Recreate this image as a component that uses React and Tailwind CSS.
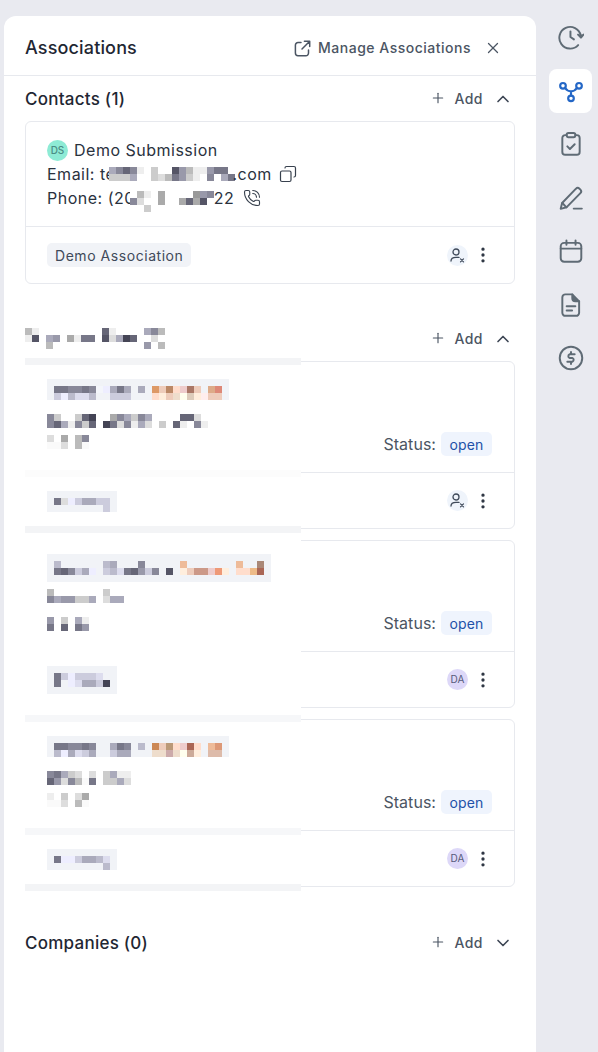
import React from "react";
import { X, Plus, ChevronUp, ChevronDown, EllipsisVertical, Copy, PhoneCall } from "lucide-react";

function Mosaic({ rows, className = "" }) {
  const parsed = rows.map((r) => r.trim().split(/\s+/));
  const cols = Math.max(...parsed.map((r) => r.length));
  return (
    <svg width={cols * 7} height={parsed.length * 7} className={`block shrink-0 ${className}`} shapeRendering="crispEdges">
      {parsed.map((r, y) =>
        r.map((c, x) => (c === "." ? null : <rect key={`${x}-${y}`} x={x * 7} y={y * 7} width="7" height="7" fill={`#${c}`} />))
      )}
    </svg>
  );
}

const Stripe = ({ className }) => <div className={`-ml-[22px] h-[7px] w-[276px] shrink-0 ${className}`} />;

const Tag = ({ rows, className }) => (
  <div className={`w-fit bg-[#f1f3f7] pl-[7px] pr-[7px] pt-[7px] ${className}`}>
    <Mosaic rows={rows} />
  </div>
);

const stroke = { fill: "none", stroke: "currentColor", strokeWidth: 1.8, strokeLinecap: "round", strokeLinejoin: "round" };

const Rail = {
  History: () => (
    <svg width="26" height="26" viewBox="0 0 24 24" {...stroke}>
      <path d="M21 10.5A10 10 0 1 0 18.6 19.5" />
      <path d="M18.5 9.8 21.2 12.6 23.6 9.8" fill="currentColor" />
      <path d="M11.5 6.8v5.2l3.2 2.2" />
    </svg>
  ),
  Share: () => (
    <svg width="26" height="26" viewBox="0 0 24 24" fill="none" stroke="#2467c6" strokeWidth="2" strokeLinecap="round">
      <circle cx="4.6" cy="7.2" r="2.6" />
      <circle cx="19.4" cy="7.2" r="2.6" />
      <circle cx="12" cy="18.8" r="2.6" />
      <path d="M6.6 9.2C8 11.4 9.8 12.2 12 12.2s4-.8 5.4-3M12 12.2v4" />
    </svg>
  ),
  Clipboard: () => (
    <svg width="26" height="26" viewBox="0 0 24 24" {...stroke}>
      <path d="M8 3.8H6.6A2.6 2.6 0 0 0 4 6.4v13A2.6 2.6 0 0 0 6.6 22h10.8a2.6 2.6 0 0 0 2.6-2.6v-13a2.6 2.6 0 0 0-2.6-2.6H16" />
      <rect x="8" y="1.8" width="8" height="4" rx="1.6" />
      <path d="M8.6 14.2l2.4 2.4 4.4-4.4" />
    </svg>
  ),
  Pen: () => (
    <svg width="26" height="26" viewBox="0 0 24 24" {...stroke}>
      <path d="M2.5 22l1.3-5.4L16.6 3.4a2.3 2.3 0 0 1 3.2 0l.9.9a2.3 2.3 0 0 1 0 3.2L7.8 20.6z" />
      <path d="M4 16.6l3.8 4" />
      <path d="M14.5 21.8h7.5" />
    </svg>
  ),
  Calendar: () => (
    <svg width="26" height="26" viewBox="0 0 24 24" {...stroke}>
      <rect x="2.5" y="4.5" width="19" height="17.5" rx="3.2" />
      <path d="M2.5 9.8h19M7.8 2.2v4M16.2 2.2v4" />
    </svg>
  ),
  File: () => (
    <svg width="26" height="26" viewBox="0 0 24 24" {...stroke}>
      <path d="M6.8 2.2h6.4l6.3 6.4v10.6a2.8 2.8 0 0 1-2.8 2.8H6.8A2.8 2.8 0 0 1 4 19.2V5a2.8 2.8 0 0 1 2.8-2.8z" />
      <path d="M13.2 2.2v3.6a2.8 2.8 0 0 0 2.8 2.8h3.5" fill="currentColor" />
      <path d="M8 13.2h8M8 17h5" />
    </svg>
  ),
  Dollar: () => (
    <svg width="26" height="26" viewBox="0 0 24 24" {...stroke}>
      <circle cx="12" cy="12" r="10.4" />
      <path d="M15.4 8.6H10.6a1.9 1.9 0 0 0 0 3.4h2.8a1.9 1.9 0 0 1 0 3.4H8.6M12 6.4v2.2M12 15.4v2.2" />
    </svg>
  ),
};

const ManageIcon = () => (
  <svg width="17" height="17" viewBox="0 0 17 17" fill="none" stroke="currentColor" strokeWidth="1.5" strokeLinecap="round" strokeLinejoin="round">
    <path d="M7 2.6H4A2.6 2.6 0 0 0 1.4 5.2v7.9A2.6 2.6 0 0 0 4 15.7h7.9a2.6 2.6 0 0 0 2.6-2.6V10" />
    <path d="M10.4 1.3h5.3v5.3M15.7 1.3 8 9" />
  </svg>
);

const UserXBadge = () => (
  <div className="flex h-[21px] w-[21px] items-center justify-center rounded-full bg-[#eff4fb] text-[#3f4a5a]">
    <svg width="17" height="17" viewBox="0 0 17 17" fill="none" stroke="currentColor" strokeWidth="1.3" strokeLinecap="round">
      <circle cx="7" cy="5" r="3" />
      <path d="M2 14c0-2.4 2-3.6 5-3.6h3" />
      <path d="M11.5 11.8l3 3M14.5 11.8l-3 3" strokeWidth="1.2" />
    </svg>
  </div>
);

const DaBadge = () => (
  <div className="flex h-[21px] w-[21px] items-center justify-center rounded-full bg-[#ddd8f8] text-[10px] text-[#565a78]">DA</div>
);

function SectionHeader({ children, open = true }) {
  return (
    <div className="flex h-[45px] items-center justify-between pr-[2px]">
      {children}
      <div className="flex items-center text-[#4b5563]">
        <Plus size={16} strokeWidth={1.7} className="-mt-[2px]" />
        <span className="ml-[8px] text-[14px] font-medium leading-none tracking-[0.5px]">Add</span>
        {open ? (
          <ChevronUp size={20} strokeWidth={2} className="ml-[10px] text-[#3d4654]" />
        ) : (
          <ChevronDown size={20} strokeWidth={2} className="ml-[10px] text-[#3d4654]" />
        )}
      </div>
    </div>
  );
}

function DealCard({ badge, className = "" }) {
  return (
    <div className={`h-[168px] rounded-md border border-[#e7e9ee] ${className}`}>
      <div className="flex h-[111px] items-end justify-end border-b border-[#e7e9ee] pb-[16px] pr-[22px]">
        <span className="text-[16px] leading-[24px] tracking-[0.03px] text-[#4b5563]">Status:</span>
        <span className="ml-[5px] flex h-[24px] w-[51px] items-center justify-center rounded-[5px] bg-[#eff4fd] text-[14px] tracking-[0.2px] text-[#2251a8]">open</span>
      </div>
      <div className="flex h-[55px] items-center justify-end gap-[5px] pr-[21px]">
        {badge}
        <EllipsisVertical size={20} strokeWidth={2} className="text-[#2f3744]" />
      </div>
    </div>
  );
}

export default function App() {
  return (
    <div className="flex h-[1052px] w-[598px] overflow-hidden bg-[#e9eaf0] pl-[4px] pt-[16px] [font-family:Inter,sans-serif] text-[#1f2733]">
      <div className="h-[1036px] w-[532px] shrink-0 rounded-t-[12px] bg-white">
        <div className="flex h-[60px] items-center justify-between border-b border-[#e7e9ee] pl-[21px] pr-[34px] pt-[5px]">
          <h1 className="text-[18px] font-medium leading-none tracking-[0.15px]">Associations</h1>
          <div className="flex items-center text-[#4b5563]">
            <ManageIcon />
            <span className="ml-[7px] text-[14px] font-medium leading-none tracking-[0.5px]">Manage Associations</span>
            <X size={18} strokeWidth={1.7} className="ml-[13px]" />
          </div>
        </div>

        <div className="px-[21px]">
          <SectionHeader>
            <h2 className="pt-[1px] text-[17px] font-medium leading-none tracking-[0.25px]">Contacts (1)</h2>
          </SectionHeader>
          <div className="h-[163px] rounded-md border border-[#e7e9ee]">
            <div className="h-[105px] border-b border-[#e7e9ee] pl-[21px] pt-[16px] text-[16px] leading-[24px] tracking-[0.5px] text-[#2a323e]">
              <div className="flex items-center">
                <span className="mr-[6px] flex h-[21px] w-[21px] items-center justify-center rounded-full bg-[#8eebd5] text-[10px] font-medium tracking-normal text-[#4b8d85]">DS</span>
                Demo Submission
              </div>
              <div className="flex items-center">
                Email: te
                <Mosaic
                  className="-ml-[6px] -mr-[3px]"
                  rows={[
                    "aab 889 667 889 eee fff ccc fff fff 556 99a bbb eee eee 99a 778 778 fff",
                    "ccc ccc ccc aab fff fff ccc ddd bbb 778 99a ccc eee fff 889 fff aab 778",
                  ]}
                />
                .com
                <Copy size={18} strokeWidth={1.6} className="ml-[7px] -scale-x-100 text-[#38414e]" />
              </div>
              <div className="flex items-center">
                Phone: (20
                <Mosaic
                  className="-ml-[5px] -mb-[7px] bg-white"
                  rows={[
                    "fff bbb eee fff aaa fff fff fff fff 999 99a 889",
                    "889 ddd fff fff aaa fff fff aaa 667 aaa 556 fff",
                    "fff fff ccc fff fff fff fff fff fff fff fff fff",
                  ]}
                />
                22
                <PhoneCall size={18} strokeWidth={1.5} className="ml-[9px] text-[#38414e]" />
              </div>
            </div>
            <div className="flex h-[56px] items-center justify-between pl-[21px] pr-[21px]">
              <span className="flex h-[24px] items-center rounded-[5px] bg-[#f1f3f7] px-[8px] text-[14px] tracking-[0.55px] text-[#3f4a5a]">Demo Association</span>
              <div className="flex items-center gap-[5px]">
                <UserXBadge />
                <EllipsisVertical size={20} strokeWidth={2} className="text-[#2f3744]" />
              </div>
            </div>
          </div>

          <div className="relative mt-[32px]">
            <SectionHeader>
              <Mosaic
                rows={[
                  "bbb eee fff . . . . . . . . 667 eee . . . . aab 889 bbb",
                  "eee 556 fff aab 99a . aaa eee 778 778 . 556 ddd aab 445 667 . fff ddd .",
                  "fff fff fff bbb . . . . . . . . . . . . . 99a fff bbb",
                ]}
              />
            </SectionHeader>
            <DealCard badge={<UserXBadge />} />
            <DealCard badge={<DaBadge />} className="mt-[11px]" />
            <DealCard badge={<DaBadge />} className="mt-[11px]" />

            <div className="absolute left-0 top-[42px] flex h-[533px] w-[276px] flex-col bg-white pl-[22px]">
              <Stripe className="bg-[#f3f4f6]" />
              <Tag
                className="mt-[14px]"
                rows={[
                  "778 778 889 889 778 889 f4f6fb eef aab 778 aab f1f3f7 aab f1f3f7 d96 ecb b86 fdc ecc a76 ecb f1f3f7 da8 d87",
                  "ccd eef bbc dde dde bbc f1f3f7 f1f3f7 ccd ccd ccd f1f3f7 f1f3f7 f1f3f7 fdc fed ecb edc ffe dcb fed fee ecb ecb",
                ]}
              />
              <Mosaic
                className="mt-[14px]"
                rows={[
                  "889 ccc . . ccc 667 445 . . aaa 889 aab ccc 889 aab . . . . 667 667 ddd . .",
                  "889 667 aab eee 889 ccc 667 . 445 778 ddd 889 eee aab ddd . ccc . 667 eee . 889 eee",
                ]}
              />
              <Mosaic className="mt-[7px]" rows={["ddd . aaa . bbb 889", "fafafa fafafa ddd . bbb fafafa"]} />
              <Stripe className="mt-[21px] bg-[#fcfcfc]" />
              <Tag
                className="mt-[14px]"
                rows={[
                  "778 ddd eef ccd aab aab ccd ccd",
                  "f1f3f7 f1f3f7 f1f3f7 f1f3f7 f1f3f7 f1f3f7 f1f3f7 ccd",
                ]}
              />
              <Stripe className="mt-[14px] bg-[#f3f4f6]" />
              <Tag
                className="mt-[21px]"
                rows={[
                  "bbc f1f3f7 f1f3f7 f1f3f7 f1f3f7 f1f3f7 f1f3f7 bbc aab f1f3f7 f1f3f7 f1f3f7 889 f1f3f7 f1f3f7 f1f3f7 f1f3f7 f1f3f7 eb9 f1f3f7 f1f3f7 f1f3f7 f1f3f7 f1f3f7 f1f3f7 f1f3f7 eb9 f1f3f7 f1f3f7 a87",
                  "778 667 889 ccd aab eef f1f3f7 ccd bbc dde 778 667 99a ccd 889 f1f3f7 556 f1f3f7 fed ecb c98 c98 ecc e97 fed f1f3f7 fdc fdc eb8 a65",
                  "f1f3f7",
                ]}
              />
              <Mosaic
                className="mt-[7px]"
                rows={[
                  "bbb . . . . . . . ccc",
                  "889 aab 99a 99a ccc ccc aab . ddd aab aab",
                ]}
              />
              <Mosaic className="mt-[14px]" rows={["99a . ccc . aab eee", "778 . 667 . 778 99a"]} />
              <Tag
                className="mt-[35px]"
                rows={[
                  "778 ccd eef ccd ccd ccd dde f1f3f7",
                  "778 f1f3f7 eef dde aab aab ccd 445",
                  "f1f3f7",
                ]}
              />
              <Stripe className="mt-[21px] bg-[#f6f7f9]" />
              <Tag
                className="mt-[14px]"
                rows={[
                  "778 778 889 889 778 889 f1f3f7 f1f3f7 aab 778 889 f1f3f7 bbc f1f3f7 c85 ecb b97 fdc ecc a65 fdc f1f3f7 eb9 d97",
                  "bbc eef aab dde ccd aab f1f3f7 f1f3f7 ccd aab aab f1f3f7 f1f3f7 f1f3f7 edc edc caa edc ffe ca9 fed f1f3f7 dba dba",
                ]}
              />
              <Mosaic
                className="mt-[14px]"
                rows={[
                  "889 778 aab ccc ddd . ddd . ccc aab eee eee",
                  "667 99a ddd 889 bbb fafafa 778 . ccc ccc aab ddd",
                ]}
              />
              <Mosaic className="mt-[8px]" rows={["eee . ccc . ddd aaa", "fafafa fafafa ddd . bbb fafafa"]} />
              <Stripe className="mt-[21px] bg-[#f6f7f9]" />
              <Tag
                className="mt-[14px]"
                rows={[
                  "778 eef eef ccd aab aab bbc dde",
                  "f1f3f7 f1f3f7 f1f3f7 f1f3f7 f1f3f7 f1f3f7 f1f3f7 bbc",
                ]}
              />
              <Stripe className="mt-[14px] bg-[#f3f4f6]" />
            </div>
          </div>

          <div className="mt-[33px]">
            <SectionHeader open={false}>
              <h2 className="pt-[1px] text-[17px] font-medium leading-none tracking-[0.25px]">Companies (0)</h2>
            </SectionHeader>
          </div>
        </div>
      </div>

      <nav className="ml-[13px] -mt-px flex w-[43px] flex-col gap-[9.5px] text-[#5f6b75]">
        <div className="flex h-[44px] items-center justify-center"><Rail.History /></div>
        <div className="flex h-[44px] items-center justify-center rounded-[8px] bg-white"><Rail.Share /></div>
        <div className="flex h-[44px] items-center justify-center"><Rail.Clipboard /></div>
        <div className="flex h-[44px] items-center justify-center"><Rail.Pen /></div>
        <div className="flex h-[44px] items-center justify-center"><Rail.Calendar /></div>
        <div className="flex h-[44px] items-center justify-center"><Rail.File /></div>
        <div className="flex h-[44px] items-center justify-center"><Rail.Dollar /></div>
      </nav>
    </div>
  );
}
